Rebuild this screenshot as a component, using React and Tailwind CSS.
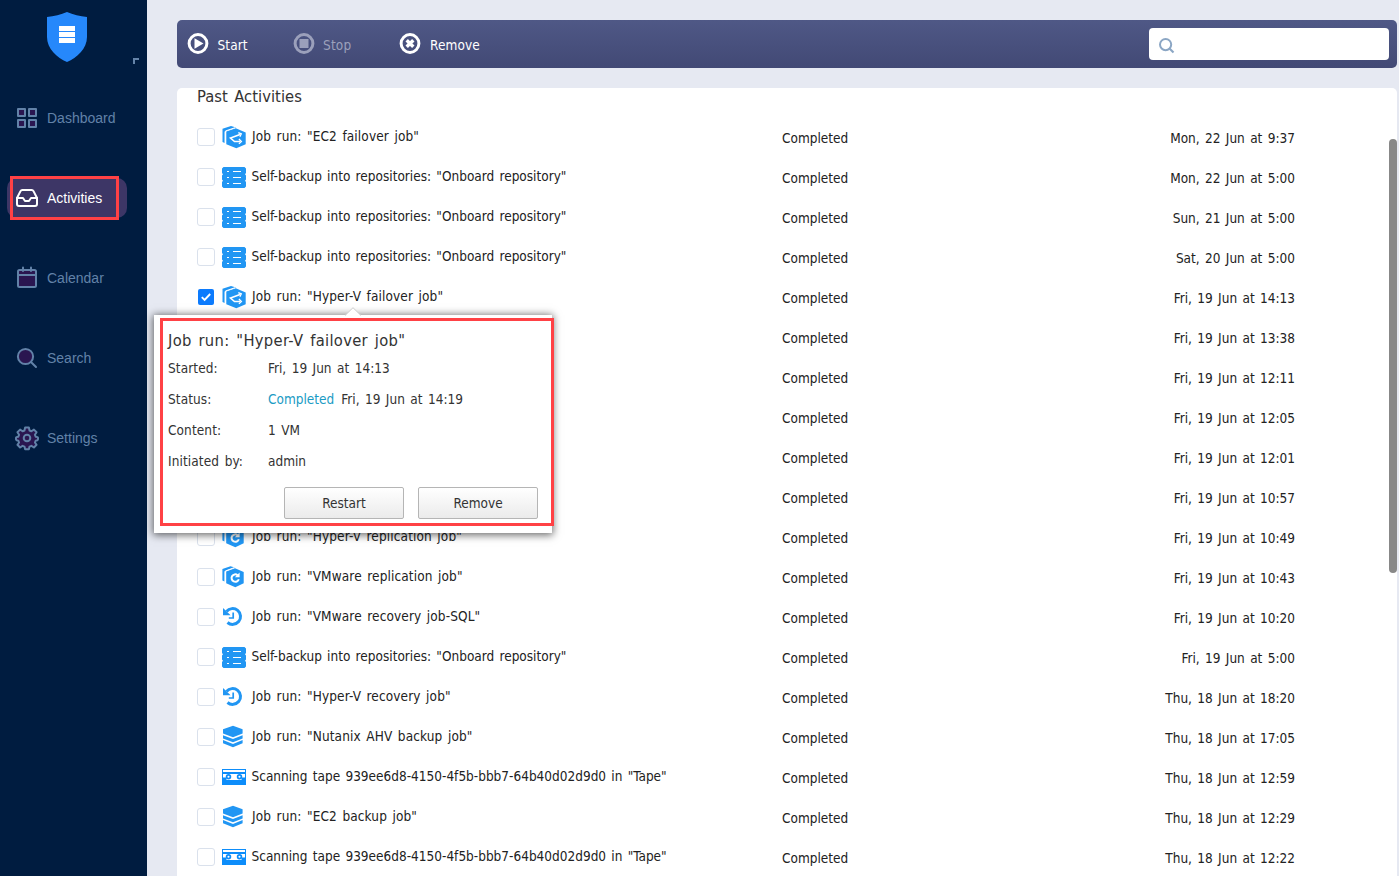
const TAHOMA = "font-['DejaVu_Sans_Condensed','DejaVu_Sans',sans-serif] [font-stretch:condensed]";

const BLUE = "#2196f3";

function ShieldLogo() {
  return (
    <svg width="40" height="50" viewBox="0 0 40 50">
      <path d="M20 0 C26 2.8 33 4.2 40 5 V25 C40 37 30 45.500 20 50 C10 45.500 0 37 0 25 V5 C7 4.200 14 2.800 20 0Z" fill="#2688fb" />
      <path d="M12 14h16v5H12zM12 20h16v5H12zM12 26h16v5H12z" fill="#fff" />
    </svg>
  );
}

const NAV_FILL = "#2a1650";

function NavIcon({ name }) {
  const common = { fill: NAV_FILL, stroke: "currentColor", strokeWidth: 2, strokeLinejoin: "round", strokeLinecap: "round" };
  return (
    <svg width="24" height="24" viewBox="0 0 24 24" className="shrink-0 overflow-visible">
      {name === "Dashboard" && (
        <g {...common}>
          <rect x="3" y="3" width="7" height="7" />
          <rect x="14" y="3" width="7" height="7" />
          <rect x="3" y="14" width="7" height="7" />
          <rect x="14" y="14" width="7" height="7" />
        </g>
      )}
      {name === "Activities" && (
        <g {...common} fill="none">
          <path d="M22 12h-6l-2 3h-4l-2-3H2" />
          <path d="M5.500 5.100 2 12v6a2 2 0 0 0 2 2h16a2 2 0 0 0 2-2v-6l-3.500-6.900A2 2 0 0 0 16.700 4H7.300a2 2 0 0 0-1.800 1.100z" />
        </g>
      )}
      {name === "Calendar" && (
        <g {...common}>
          <rect x="3" y="4" width="18" height="17" rx="1.500" />
          <path d="M3 9h18M8 1.500V5M16 1.500V5" />
        </g>
      )}
      {name === "Search" && (
        <g {...common}>
          <circle cx="10.500" cy="10.500" r="7.600" />
          <path d="m16.200 16.200 4.800 4.800" />
        </g>
      )}
      {name === "Settings" && (
        <g {...common} transform="translate(12 12) scale(1.1) translate(-12 -12)" strokeWidth="1.800">
          <path d="M10.300 2.500h3.400l.6 2.700 1.700.7 2.300-1.500 2.400 2.400-1.500 2.300.7 1.700 1.700.4.400.6v1.400l-.5.800-1.600.4-.7 1.700 1.500 2.100-2.400 2.400-2.300-1.500-1.700.7-.6 2.400h-3.400l-.6-2.400-1.700-.7-2.300 1.500-2.400-2.400 1.500-2.100-.7-1.700-1.600-.4-.5-.8v-1.400l.4-.6 1.700-.4.700-1.700-1.500-2.300 2.400-2.400 2.300 1.500 1.700-.7z" />
          <circle cx="12" cy="12" r="3" />
        </g>
      )}
    </svg>
  );
}

function ToolIcon({ name }) {
  return (
    <svg width="22" height="22" viewBox="0 0 22 22" className="shrink-0">
      <circle cx="11" cy="10.500" r="8.900" fill="none" stroke="currentColor" strokeWidth="3" />
      {name === "Start" && <path d="M7.500 5.300v10.400l9-5.200z" fill="currentColor" />}
      {name === "Stop" && <path d="M6.500 6h9v9h-9z" fill="currentColor" />}
      {name === "Remove" && <path d="m7.700 7.200 6.600 6.600M14.300 7.200l-6.600 6.600" stroke="currentColor" strokeWidth="3.400" />}
    </svg>
  );
}

function JobIcon({ type }) {
  return (
    <svg width="24" height="24" viewBox="0 0 24 24" className="shrink-0">
      {type === "failover" && (
        <g>
          <path d="M.5 17V3.800L9 1l5 1.500-9.500 3.300-1.900 1V18z" fill={BLUE} />
          <path d="M13.800 3.200 23.700 7.600V19.300L14.300 23.300 4.300 19.300V6.600z" fill={BLUE} />
          <path d="M3.400 19V6L13 2.700" fill="none" stroke="#fff" strokeWidth="1" />
          <g fill="none" stroke="#fff" strokeWidth="1.600">
            <path d="M18 9.500 8.500 13l4 3.500H18" />
            <path d="m16.300 7.600 3 1.300-1.400 2.900M16.900 14l2.500 2.500-2.500 2.400" strokeWidth="1.300" />
          </g>
        </g>
      )}
      {type === "replication" && (
        <g>
          <path d="M.4 15.500V4L8.500 1.200l4.300 1.300L4.300 5.600l-1.800 1V16.500z" fill={BLUE} />
          <path d="M13 3.200 21.700 7V18.300L13.300 22.300 4.200 18.300V6.600z" fill={BLUE} />
          <path d="M3.300 18V6L12.300 2.600" fill="none" stroke="#fff" strokeWidth="1" />
          <path d="M15.600 10.200A3.700 3.700 0 1 0 16.800 14.200" fill="none" stroke="#fff" strokeWidth="2" />
          <path d="M17.600 7.600v4.700h-4.700z" fill="#fff" />
        </g>
      )}
      {type === "repository" && (
        <g>
          <path d="M1.500 2h21L24 3.500V8l-1 1.300 1 1.300v3.900l-1 1.200 1 1.300v4.500L22.500 23h-21L0 21.500V17l1-1.300-1-1.200v-3.900l1-1.300L0 8V3.500z" fill={BLUE} />
          <path d="M5 6.500h2M11 6.500h8M5 12.500h2M11 12.500h8M5 18.500h2M11 18.500h8" stroke="#fff" strokeWidth="1" />
        </g>
      )}
      {type === "recovery" && (
        <g fill="none" stroke={BLUE} strokeWidth="3">
          <path d="M4.500 6.500A7.900 7.900 0 1 1 5.500 17.500" />
          <path d="M1 3v7.300h7.600z" fill={BLUE} stroke="none" />
          <path d="M11.200 7.500v5.500H6.800" strokeWidth="1.700" />
        </g>
      )}
      {type === "backup" && (
        <g fill={BLUE}>
          <path d="M11 .8 20.600 4.300V8.500L11 12.200 1 8.500V4.300z" />
          <path d="M1 10.200 11 14 20.600 10.200V13.400L11 17.200 1 13.400z" />
          <path d="M1 15 11 19 20.600 15V18.200L11 22.200 1 18.200z" />
        </g>
      )}
      {type === "tape" && (
        <g>
          <path d="M0 4h24v16H0z" fill="#0d8dfa" />
          <path d="M1 5h22v2H1zM1 9h22v3.500L21.500 15h-19L1 12.500z" fill="#fff" />
          <path d="M1 12.600h3.500v2.400H1zM19.500 12.600H23v2.400h-3.500z" fill="#0d8dfa" />
          <circle cx="6.500" cy="11.700" r="1.900" fill="#fff" stroke="#0d8dfa" strokeWidth="1.700" />
          <circle cx="17.500" cy="11.700" r="1.900" fill="#fff" stroke="#0d8dfa" strokeWidth="1.700" />
        </g>
      )}
    </svg>
  );
}

const NAV = ["Dashboard", "Activities", "Calendar", "Search", "Settings"];

const REPO = 'Self-backup into repositories: "Onboard repository"';
const TAPE = 'Scanning tape 939ee6d8-4150-4f5b-bbb7-64b40d02d9d0 in "Tape"';

const ROWS = [
  { type: "failover", name: 'Job run: "EC2 failover job"', date: "Mon, 22 Jun at 9:37" },
  { type: "repository", name: REPO, date: "Mon, 22 Jun at 5:00" },
  { type: "repository", name: REPO, date: "Sun, 21 Jun at 5:00" },
  { type: "repository", name: REPO, date: "Sat, 20 Jun at 5:00" },
  { type: "failover", name: 'Job run: "Hyper-V failover job"', date: "Fri, 19 Jun at 14:13", checked: true },
  { date: "Fri, 19 Jun at 13:38" },
  { date: "Fri, 19 Jun at 12:11" },
  { date: "Fri, 19 Jun at 12:05" },
  { date: "Fri, 19 Jun at 12:01" },
  { date: "Fri, 19 Jun at 10:57" },
  { type: "replication", name: 'Job run: "Hyper-V replication job"', date: "Fri, 19 Jun at 10:49" },
  { type: "replication", name: 'Job run: "VMware replication job"', date: "Fri, 19 Jun at 10:43" },
  { type: "recovery", name: 'Job run: "VMware recovery job-SQL"', date: "Fri, 19 Jun at 10:20" },
  { type: "repository", name: REPO, date: "Fri, 19 Jun at 5:00" },
  { type: "recovery", name: 'Job run: "Hyper-V recovery job"', date: "Thu, 18 Jun at 18:20" },
  { type: "backup", name: 'Job run: "Nutanix AHV backup job"', date: "Thu, 18 Jun at 17:05" },
  { type: "tape", name: TAPE, date: "Thu, 18 Jun at 12:59" },
  { type: "backup", name: 'Job run: "EC2 backup job"', date: "Thu, 18 Jun at 12:29" },
  { type: "tape", name: TAPE, date: "Thu, 18 Jun at 12:22" },
];

function Checkbox({ checked }) {
  if (checked) {
    return (
      <span className="m-px flex size-4 shrink-0 items-center justify-center rounded-xs bg-[#0c7bfd]">
        <svg width="12" height="12" viewBox="0 0 12 12">
          <path d="M1.800 6.200 4.600 9l5.600-6" fill="none" stroke="#fff" strokeWidth="1.900" />
        </svg>
      </span>
    );
  }
  return <span className="size-[18px] shrink-0 rounded-[3px] border border-[#dae1ec] bg-white" />;
}

function Row({ row }) {
  const isJob = row.name?.startsWith("Job");
  return (
    <div className="flex h-10 shrink-0 items-center pl-5">
      <div className="flex w-[585px] items-center">
        <Checkbox checked={row.checked} />
        <span className="ml-[7px] flex">
          <JobIcon type={row.type} />
        </span>
        <span
          className={`pb-[3px] leading-5 whitespace-nowrap ${
            isJob ? "ml-[6px] tracking-[0.12px] [word-spacing:1.5px]" : "ml-[5.5px] [word-spacing:1.4px]"
          }`}
        >
          {row.name}
        </span>
      </div>
      <div className="w-[213px] pt-px leading-5">Completed</div>
      <div className="w-[300px] pt-px text-right leading-5 [word-spacing:1.5px]">{row.date}</div>
    </div>
  );
}

function Detail({ label, children }) {
  return (
    <div className="flex h-[31px] items-center leading-5 [word-spacing:1.6px]">
      <span className="w-[100px] tracking-[0.1px]">{label}</span>
      {children}
    </div>
  );
}

function DialogButton({ children }) {
  return (
    <button className="h-8 w-[120px] rounded-xs border border-[#b5b5b5] bg-linear-to-b from-white to-[#ebebeb] leading-5">
      {children}
    </button>
  );
}

function JobPopup() {
  return (
    <div className="absolute top-[315px] left-[154px] h-[218px] w-[398px] bg-white pl-3.5 text-[#333] shadow-[0_1px_8px_1px_rgba(0,0,0,0.6)]">
      <svg className="absolute top-[-8px] left-[190px]" width="18" height="9" viewBox="0 0 18 9">
        <path d="M1 8.500 9 .7l8 7.800" fill="#fff" stroke="#ccc" />
      </svg>
      <div className="pointer-events-none absolute top-[3px] left-[6px] h-[208px] w-[394px] border-3 border-[#ff4145]" />
      <h2 className="pt-[14px] text-[16.4px] leading-[23px] tracking-[0.32px] [word-spacing:1.8px]">Job run: "Hyper-V failover job"</h2>
      <div>
        <Detail label="Started:">Fri, 19 Jun at 14:13</Detail>
        <Detail label="Status:">
          <span className="mr-[7px] text-[#1a9bc4]">Completed</span>Fri, 19 Jun at 14:19
        </Detail>
        <Detail label="Content:">1 VM</Detail>
        <Detail label="Initiated by:">admin</Detail>
      </div>
      <div className="mt-[11px] flex justify-end gap-3.5 pr-3.5">
        <DialogButton>Restart</DialogButton>
        <DialogButton>Remove</DialogButton>
      </div>
    </div>
  );
}

export default function App() {
  return (
    <div className={`relative flex h-[876px] w-[1399px] overflow-hidden bg-[#e6e9f2] text-[13.5px] text-[#222] ${TAHOMA}`}>
      <aside className="relative flex w-[147px] shrink-0 flex-col bg-[#001c40] font-['Liberation_Sans',Arial,sans-serif] text-sm">
        <div className="flex h-[98px] pt-3 pl-[47px]">
          <ShieldLogo />
          <span className="mt-[46px] ml-[46px] size-1.5 border-t-2 border-l-2 border-[#6584a9]" />
        </div>
        <nav className="flex flex-col gap-10 pl-[7px]">
          {NAV.map((item) => (
            <div
              key={item}
              className={`flex h-10 w-[120px] items-center gap-2 rounded-[10px] pl-2 ${
                item === "Activities" ? "bg-[#3d3666] text-white" : "text-[#6282a8]"
              }`}
            >
              <NavIcon name={item} />
              {item}
            </div>
          ))}
        </nav>
        <div className="absolute top-[176px] left-[10px] h-11 w-[109px] border-3 border-[#ff4145]" />
      </aside>

      <main className="flex w-[1250px] flex-col pt-5 pl-[30px]">
        <div className="flex h-12 shrink-0 items-center rounded-[5px] bg-linear-to-b from-[#4f5886] to-[#424975] pl-2.5 text-white">
          <div className="flex w-[105.5px] items-center gap-[8.5px]">
            <ToolIcon name="Start" />
            <span className="pt-0.5 leading-5 tracking-[0.1px]">Start</span>
          </div>
          <div className="flex w-[106.5px] items-center gap-[8.5px] text-[#9ba0bb]">
            <ToolIcon name="Stop" />
            <span className="pt-0.5 leading-5 tracking-[0.2px]">Stop</span>
          </div>
          <div className="flex items-center gap-[9px]">
            <ToolIcon name="Remove" />
            <span className="pt-0.5 leading-5 tracking-[0.1px]">Remove</span>
          </div>
          <div className="mr-2 ml-auto flex h-8 w-60 items-center rounded-sm bg-white pl-2.5">
            <svg width="16" height="16" viewBox="0 0 16 16" className="mt-[3px]">
              <circle cx="6.600" cy="6.600" r="5.600" fill="none" stroke="#8ba6c4" strokeWidth="2" />
              <path d="m10.500 10.500 4 4" stroke="#8ba6c4" strokeWidth="2.200" />
            </svg>
          </div>
        </div>

        <section className="relative mt-5 flex h-[788px] flex-col overflow-hidden rounded-t-[5px] bg-white">
          <h1 className="h-[29px] shrink-0 pl-5 text-[16.4px] leading-[18px] tracking-[0.05px] text-[#333] [word-spacing:1.6px]">Past Activities</h1>
          {ROWS.map((row) => (
            <Row key={row.date} row={row} />
          ))}
          <div className="absolute top-[51px] right-0 h-[434px] w-2 rounded-full bg-[#888]" />
        </section>
      </main>

      <JobPopup />
    </div>
  );
}
